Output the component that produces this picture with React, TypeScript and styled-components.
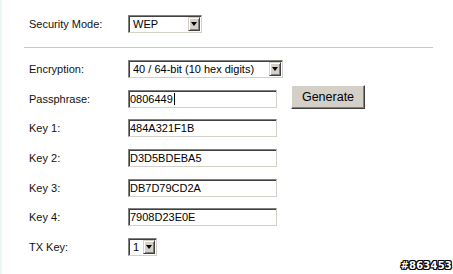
import React from "react";
import styled, { createGlobalStyle } from "styled-components";

const Global = createGlobalStyle`
  html, body { margin: 0; padding: 0; background: #ffffff; }
  body { font-family: "Liberation Sans", Arial, sans-serif; }
`;

const Page = styled.div`
  position: relative;
  width: 453px;
  height: 274px;
  box-sizing: border-box;
  border-left: 2px solid #eef5f5;
  background: #ffffff;
  overflow: hidden;
`;

const Section = styled.div`
  padding: 15px 0 0 27px;
`;

const Row = styled.div<{ $h?: number }>`
  display: grid;
  grid-template-columns: 99px auto auto;
  justify-content: start;
  align-items: center;
  height: ${(p) => p.$h ?? 29.7}px;
`;

const Label = styled.span`
  font-size: 11px;
  color: #111;
  white-space: nowrap;
`;

const Divider = styled.div`
  margin: 14px 20px 6px 22px;
  height: 1px;
  background: #c8c8c8;
`;

const Form = styled.div`
  padding-left: 27px;
`;

const Inset = styled.div<{ $w: number }>`
  box-sizing: border-box;
  width: ${(p) => p.$w}px;
  height: 18px;
  background: #fff;
  border-top: 1px solid #808080;
  border-left: 1px solid #808080;
  border-right: 1px solid #d4d0c8;
  border-bottom: 1px solid #d4d0c8;
  box-shadow: inset 1px 1px 0 #404040;
  display: flex;
  align-items: center;
`;

const FieldText = styled.span<{ $pad: number }>`
  flex: 1;
  padding-left: ${(p) => p.$pad}px;
  font-size: 11px;
  color: #000;
  white-space: nowrap;
  overflow: hidden;
  display: flex;
  align-items: center;
`;

const Caret = styled.span`
  display: inline-block;
  width: 1px;
  height: 12px;
  background: #000;
  margin-left: 1px;
`;

const ArrowButton = styled.span`
  box-sizing: border-box;
  width: 12px;
  height: 14px;
  margin-right: 1px;
  background: #d4d0c8;
  border-top: 1px solid #d4d0c8;
  border-left: 1px solid #d4d0c8;
  border-right: 1px solid #404040;
  border-bottom: 1px solid #404040;
  box-shadow: inset 1px 1px 0 #ffffff, inset -1px -1px 0 #808080;
  display: flex;
  align-items: center;
  justify-content: center;
`;

const Triangle = styled.span`
  width: 0;
  height: 0;
  border-left: 3.5px solid transparent;
  border-right: 3.5px solid transparent;
  border-top: 4px solid #000;
`;

const GenerateButton = styled.button`
  box-sizing: border-box;
  margin-left: 14px;
  margin-top: -3px;
  width: 74px;
  height: 24px;
  padding: 0;
  background: #d4d0c8;
  font-family: "Liberation Sans", Arial, sans-serif;
  font-size: 12.5px;
  color: #000;
  border-top: 1px solid #ffffff;
  border-left: 1px solid #ffffff;
  border-right: 1px solid #404040;
  border-bottom: 1px solid #404040;
  box-shadow: inset -1px -1px 0 #808080;
`;

const Watermark = styled.span`
  position: absolute;
  right: 1px;
  bottom: 3px;
  font-family: "DejaVu Sans", sans-serif;
  font-weight: bold;
  font-size: 10px;
  letter-spacing: 0.2px;
  color: #ffffff;
  text-shadow: 1px 0 0 #000, -1px 0 0 #000, 0 1px 0 #000, 0 -1px 0 #000,
    1px 1px 0 #000, -1px -1px 0 #000, 1px -1px 0 #000, -1px 1px 0 #000;
`;

function Select({ width, value }: { width: number; value: string }) {
  return (
    <Inset $w={width}>
      <FieldText $pad={4}>{value}</FieldText>
      <ArrowButton>
        <Triangle />
      </ArrowButton>
    </Inset>
  );
}

function TextInput({ value, caret }: { value: string; caret?: boolean }) {
  return (
    <Inset $w={149}>
      <FieldText $pad={1}>
        {value}
        {caret && <Caret />}
      </FieldText>
    </Inset>
  );
}

const keys = [
  ["Key 1:", "484A321F1B"],
  ["Key 2:", "D3D5BDEBA5"],
  ["Key 3:", "DB7D79CD2A"],
  ["Key 4:", "7908D23E0E"],
];

export default function App() {
  return (
    <Page>
      <Global />
      <Section>
        <Row $h={18}>
          <Label>Security Mode:</Label>
          <Select width={74} value="WEP" />
        </Row>
      </Section>
      <Divider />
      <Form>
        <Row>
          <Label>Encryption:</Label>
          <Select width={155} value="40 / 64-bit (10 hex digits)" />
        </Row>
        <Row>
          <Label>Passphrase:</Label>
          <TextInput value="0806449" caret />
          <GenerateButton>Generate</GenerateButton>
        </Row>
        {keys.map(([label, value]) => (
          <Row key={label}>
            <Label>{label}</Label>
            <TextInput value={value} />
          </Row>
        ))}
        <Row>
          <Label>TX Key:</Label>
          <Select width={29} value="1" />
        </Row>
      </Form>
      <Watermark>#863453</Watermark>
    </Page>
  );
}
